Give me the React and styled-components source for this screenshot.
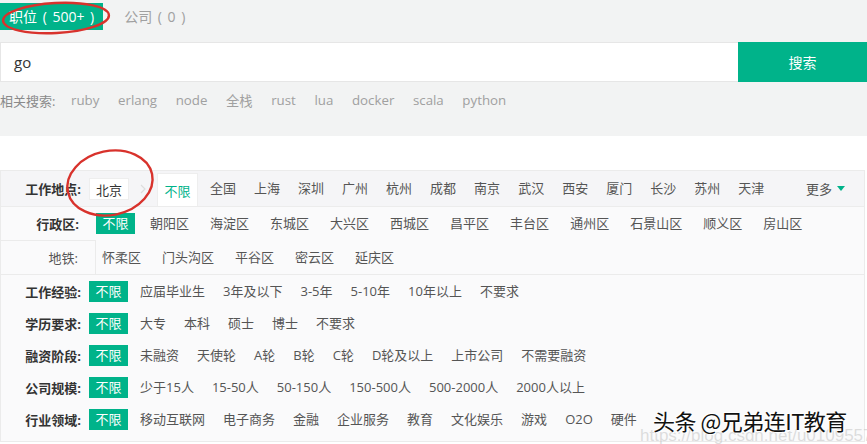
import React from "react";
import styled, { createGlobalStyle } from "styled-components";

const green = "#00b38a";

const GlobalStyle = createGlobalStyle`
  body {
    margin: 0;
    background: #fff;
    font-family: "Open Sans", "Noto Sans CJK SC", sans-serif;
  }
`;

const Page = styled.div`
  position: relative;
  width: 867px;
  height: 444px;
  overflow: hidden;
`;

const SearchArea = styled.section`
  background: #f2f3f3;
  height: 136px;
  display: flex;
  flex-direction: column;
  margin-bottom: 34px;
`;

const Tabs = styled.div`
  display: flex;
  align-items: center;
  gap: 12px;
  padding-top: 3px;
`;

const Tab = styled.div`
  height: 27px;
  line-height: 27px;
  padding: 0 9px;
  font-size: 14px;
  word-spacing: 2px;
  color: ${p => (p.active ? "#fff" : "#a0a0a0")};
  background: ${p => (p.active ? green : "transparent")};
`;

const SearchRow = styled.div`
  display: flex;
  height: 40px;
  margin-top: 12px;
`;

const SearchInput = styled.div`
  flex: 1;
  background: #fff;
  border: 1px solid #e6e6e6;
  border-right: none;
  box-sizing: border-box;
  padding-left: 13px;
  display: flex;
  align-items: center;
  font-size: 15px;
  color: #333;
`;

const SearchButton = styled.button`
  width: 129px;
  border: none;
  background: ${green};
  color: #fff;
  font-family: inherit;
  font-size: 14px;
`;

const Related = styled.div`
  display: flex;
  align-items: center;
  gap: 18.6px;
  height: 36px;
  font-size: 13.3px;
  color: #a0a0a0;
`;

const RelatedLabel = styled.span`
  color: #8a8a8a;
  font-size: 13px;
  margin-right: -3px;
`;

const Panel = styled.section`
  width: 863px;
  border: 1px solid #ebebeb;
  background: #fafafb;
  font-size: 13px;
  color: #555;
`;

const LocationBlock = styled.div`
  border-bottom: 1px solid #ebebeb;
`;

const CityRow = styled.div`
  display: flex;
  align-items: center;
  height: 35px;
  background: #f5f5f7;
  border-bottom: 1px solid #ececec;
`;

const Label = styled.div`
  width: 80px;
  flex-shrink: 0;
  text-align: right;
  font-weight: bold;
  color: #333;
`;

const CityInput = styled.div`
  margin-left: 8px;
  width: 40px;
  height: 22px;
  line-height: 22px;
  box-sizing: border-box;
  border: 1px solid #eee;
  background: #fff;
  text-align: center;
  color: #333;
`;

const Chevron = styled.div`
  width: 28px;
  display: flex;
  justify-content: center;
`;

const CityTab = styled.div`
  align-self: stretch;
  margin-top: 2px;
  padding: 0 6.5px;
  display: flex;
  align-items: center;
  background: #fff;
  border: 1px solid #eee;
  border-bottom: none;
  color: ${green};
`;

const Options = styled.div`
  display: flex;
  align-items: center;
  gap: ${p => p.gap || 6}px;
  margin-left: ${p => p.offset || 0}px;
`;

const Option = styled.span`
  height: 21px;
  line-height: 21px;
  padding: 0 ${p => (p.selected ? 6.5 : 6)}px;
  white-space: nowrap;
  color: ${p => (p.selected ? "#fff" : "#555")};
  background: ${p => (p.selected ? green : "transparent")};
`;

const More = styled.div`
  margin-left: auto;
  padding-right: 19px;
  display: flex;
  align-items: center;
  gap: 5px;

  &::after {
    content: "";
    border-left: 4px solid transparent;
    border-right: 4px solid transparent;
    border-top: 5px solid ${green};
  }
`;

const SubRow = styled.div`
  display: flex;
  align-items: center;
  height: ${p => p.h}px;
`;

const SubLabel = styled.div`
  width: 95px;
  flex-shrink: 0;
  align-self: stretch;
  box-sizing: border-box;
  padding-right: 17px;
  display: flex;
  align-items: center;
  justify-content: flex-end;
  font-weight: ${p => (p.boxed ? "normal" : "bold")};
  color: ${p => (p.boxed ? "#555" : "#333")};
  border-top: ${p => (p.boxed ? "1px solid #ebebeb" : "none")};
  border-right: ${p => (p.boxed ? "1px solid #ebebeb" : "none")};
`;

const Conditions = styled.div`
  padding-bottom: 6px;
`;

const ConditionRow = styled.div`
  display: flex;
  align-items: center;
  height: 32px;
`;

const Overlay = styled.svg`
  position: absolute;
  left: 0;
  top: 0;
  pointer-events: none;
`;

const Watermark = styled.div`
  position: absolute;
  left: 653px;
  top: 404px;
  font-family: "Noto Sans CJK SC", sans-serif;
  font-size: 22px;
  color: #111;
  letter-spacing: -0.5px;
  text-shadow: 0 0 2px #fff, 1px 1px 0 #fff, -1px -1px 0 #fff;
`;

const WatermarkUrl = styled.div`
  position: absolute;
  left: 640px;
  top: 426px;
  font-family: "Liberation Sans", sans-serif;
  font-size: 17px;
  color: rgba(190, 190, 190, 0.5);
  white-space: nowrap;
`;

const cities = ["全国", "上海", "深圳", "广州", "杭州", "成都", "南京", "武汉", "西安", "厦门", "长沙", "苏州", "天津"];
const districts = ["朝阳区", "海淀区", "东城区", "大兴区", "西城区", "昌平区", "丰台区", "通州区", "石景山区", "顺义区", "房山区"];
const subways = ["怀柔区", "门头沟区", "平谷区", "密云区", "延庆区"];
const related = ["ruby", "erlang", "node", "全栈", "rust", "lua", "docker", "scala", "python"];

const conditions = [
  { title: "工作经验", items: ["应届毕业生", "3年及以下", "3-5年", "5-10年", "10年以上", "不要求"] },
  { title: "学历要求", items: ["大专", "本科", "硕士", "博士", "不要求"] },
  { title: "融资阶段", items: ["未融资", "天使轮", "A轮", "B轮", "C轮", "D轮及以上", "上市公司", "不需要融资"] },
  { title: "公司规模", items: ["少于15人", "15-50人", "50-150人", "150-500人", "500-2000人", "2000人以上"] },
  { title: "行业领域", items: ["移动互联网", "电子商务", "金融", "企业服务", "教育", "文化娱乐", "游戏", "O2O", "硬件"] },
];

const App = () => {
  return (
    <Page>
      <GlobalStyle />
      <SearchArea>
        <Tabs>
          <Tab active>职位 ( 500+ )</Tab>
          <Tab>公司 ( 0 )</Tab>
        </Tabs>
        <SearchRow>
          <SearchInput>go</SearchInput>
          <SearchButton type="button">搜索</SearchButton>
        </SearchRow>
        <Related>
          <RelatedLabel>相关搜索:</RelatedLabel>
          {related.map(r => <span key={r}>{r}</span>)}
        </Related>
      </SearchArea>

      <Panel>
        <LocationBlock>
          <CityRow>
            <Label>工作地点:</Label>
            <CityInput>北京</CityInput>
            <Chevron>
              <svg width="6" height="10" viewBox="0 0 6 10">
                <path d="M1 1 L5 5 L1 9" fill="none" stroke="#ddd" strokeWidth="1.2" />
              </svg>
            </Chevron>
            <CityTab>不限</CityTab>
            <Options offset={6}>
              {cities.map(c => <Option key={c}>{c}</Option>)}
            </Options>
            <More>更多</More>
          </CityRow>
          <SubRow h={33}>
            <SubLabel>行政区:</SubLabel>
            <Options gap={9}>
              <Option selected>不限</Option>
              {districts.map(d => <Option key={d}>{d}</Option>)}
            </Options>
          </SubRow>
          <SubRow h={34}>
            <SubLabel boxed>地铁:</SubLabel>
            <Options gap={9}>
              {subways.map(s => <Option key={s}>{s}</Option>)}
            </Options>
          </SubRow>
        </LocationBlock>
        <Conditions>
          {conditions.map(row => (
            <ConditionRow key={row.title}>
              <Label>{row.title}:</Label>
              <Options offset={8}>
                <Option selected>不限</Option>
                {row.items.map(i => <Option key={i}>{i}</Option>)}
              </Options>
            </ConditionRow>
          ))}
        </Conditions>
      </Panel>

      <Overlay width="867" height="444">
        <ellipse cx="56" cy="18" rx="53" ry="15" fill="none" stroke="#d8322c" strokeWidth="2.4" transform="rotate(-3 56 18)" />
        <ellipse cx="110" cy="183" rx="43" ry="32" fill="none" stroke="#d8322c" strokeWidth="2.4" transform="rotate(-12 110 183)" />
      </Overlay>
      <WatermarkUrl>https://blog.csdn.net/u010955776</WatermarkUrl>
      <Watermark>头条 @兄弟连IT教育</Watermark>
    </Page>
  );
};

export default App;
